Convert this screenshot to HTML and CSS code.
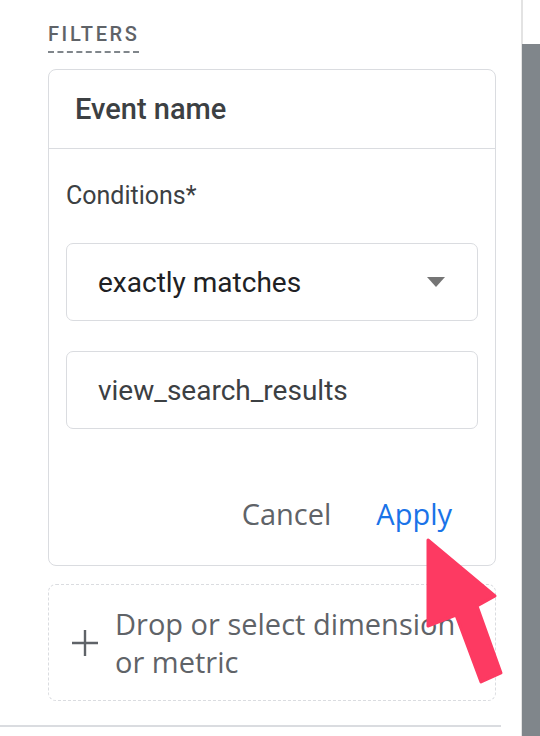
FILE: index.html
```html
<!DOCTYPE html>
<html>
<head>
<meta charset="utf-8">
<link rel="stylesheet" href="styles.css">
</head>
<body>
<div class="page">
  <div class="panel">
    <div class="section-title"><span>FILTERS</span></div>
    <div class="card">
      <div class="card-header">Event name</div>
      <div class="card-body">
        <div class="label">Conditions*</div>
        <div class="field select">
          <span>exactly matches</span>
          <svg class="caret" width="18" height="10" viewBox="0 0 18 10"><path d="M0 0 H18 L9 10 Z" fill="#757575"/></svg>
        </div>
        <div class="field input"><span>view_search_results</span></div>
        <div class="actions">
          <span class="btn cancel">Cancel</span>
          <span class="btn apply">Apply</span>
        </div>
      </div>
    </div>
    <div class="dropzone">
      <svg class="plus" width="26" height="26" viewBox="0 0 26 26"><path d="M13 0 V26 M0 13 H26" stroke="#5f6368" stroke-width="2.4"/></svg>
      <div class="drop-text">Drop or select dimension or metric</div>
    </div>
    <div class="bottom-rule"></div>
    <svg class="arrow" width="80" height="150" viewBox="424 536 80 150">
      <path d="M428 540 L495 596 L477 606 L501 673 L481 682 L456 615 L428 626 Z" fill="#fd3a62" stroke="#fd3a62" stroke-width="3" stroke-linejoin="round"/>
    </svg>
  </div>
  <div class="scrollbar"><div class="thumb"></div></div>
</div>
</body>
</html>
```

FILE: styles.css
```css
html, body {
  margin: 0;
  padding: 0;
  background: #ffffff;
}
body {
  width: 540px;
  height: 736px;
  overflow: hidden;
  font-family: Roboto, "Liberation Sans", sans-serif;
}
.page {
  display: flex;
  width: 540px;
  height: 736px;
}
.panel {
  position: relative;
  width: 521px;
  height: 736px;
  padding-left: 48px;
  box-sizing: border-box;
}
.section-title {
  padding-top: 22px;
  height: 32px;
}
.section-title span {
  display: inline-block;
  font-size: 20px;
  font-weight: 500;
  letter-spacing: 2.6px;
  color: #5f6368;
  line-height: 24px;
  padding-bottom: 5px;
  border-bottom: 2px dashed #80868b;
}
.card {
  margin-top: 15px;
  width: 448px;
  box-sizing: border-box;
  border: 1.5px solid #dadce0;
  border-radius: 8px;
  height: 497px;
}
.card-header {
  height: 78px;
  border-bottom: 1.5px solid #dadce0;
  display: flex;
  align-items: center;
  padding-left: 26px;
  font-family: Roboto, "Liberation Sans", sans-serif;
  font-size: 29px;
  font-weight: 500;
  color: #3c4043;
}
.card-body {
  padding: 0 17px;
}
.label {
  padding-top: 32px;
  height: 62px;
  box-sizing: border-box;
  font-size: 25px;
  color: #3c4043;
  line-height: 30px;
}
.field {
  margin-top: 32px;
  height: 78px;
  box-sizing: border-box;
  border: 1.5px solid #dadce0;
  border-radius: 7px;
  display: flex;
  align-items: center;
  justify-content: space-between;
  padding: 0 32px 0 31px;
  font-size: 28px;
  color: #202124;
}
.input {
  margin-top: 30px;
  color: #3c4043;
}
.caret {
  display: block;
}
.actions {
  display: flex;
  justify-content: flex-end;
  align-items: center;
  gap: 45px;
  height: 60px;
  margin-top: 54px;
  padding-right: 26px;
  font-family: "Open Sans", Roboto, sans-serif;
  font-size: 29px;
}
.cancel {
  color: #5f6368;
}
.apply {
  color: #1a73e8;
}
.dropzone {
  margin-top: 18px;
  width: 448px;
  height: 117px;
  box-sizing: border-box;
  border: 1.5px dashed #dadce0;
  border-radius: 8px;
  display: flex;
  align-items: center;
  padding-left: 23px;
  gap: 17px;
  overflow: hidden;
}
.plus {
  flex: none;
}
.drop-text {
  font-family: "Open Sans", Roboto, sans-serif;
  font-size: 29px;
  line-height: 38px;
  color: #5f6368;
  width: 360px;
}
.bottom-rule {
  position: absolute;
  left: 0;
  top: 725px;
  width: 501px;
  height: 2px;
  background: #dadce0;
}
.arrow {
  position: absolute;
  left: 424px;
  top: 536px;
}
.scrollbar {
  width: 19px;
  height: 736px;
  border-left: 2px solid #e3e3e3;
  box-sizing: border-box;
  display: flex;
  flex-direction: column;
  padding-top: 44px;
}
.thumb {
  flex: 1;
  margin-left: -1px;
  background: #80868b;
}
```
